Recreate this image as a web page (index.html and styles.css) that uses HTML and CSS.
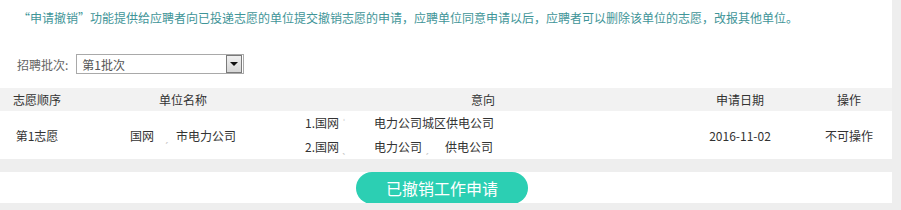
FILE: index.html
```html
<!DOCTYPE html>
<html lang="zh-CN">
<head>
    <meta charset="UTF-8">
    <title>申请撤销</title>
    <link rel="stylesheet" href="styles.css">
</head>
<body>
    <div class="main">
        <div class="panel">
            <p class="intro">“申请撤销”功能提供给应聘者向已投递志愿的单位提交撤销志愿的申请，应聘单位同意申请以后，应聘者可以删除该单位的志愿，改报其他单位。</p>

            <div class="filter">
                <label>招聘批次:</label>
                <div class="select">
                    <span class="select-text">第1批次</span>
                    <span class="select-btn"><i class="caret"></i></span>
                </div>
            </div>

            <table class="wish-table">
                <thead>
                    <tr>
                        <th class="col-order">志愿顺序</th>
                        <th class="col-unit">单位名称</th>
                        <th class="col-intent">意向</th>
                        <th class="col-date">申请日期</th>
                        <th class="col-op">操作</th>
                    </tr>
                </thead>
                <tbody>
                    <tr>
                        <td class="col-order">第1志愿</td>
                        <td class="col-unit">国网<span class="mask w22">ˏ</span>市电力公司</td>
                        <td class="col-intent">
                            <div>1.国网<span class="mask w35">ˈ</span>电力公司城区供电公司</div>
                            <div>2.国网<span class="mask w35">ˎ</span>电力公司<span class="mask w23">ˏ</span>供电公司</div>
                        </td>
                        <td class="col-date">2016-11-02</td>
                        <td class="col-op">不可操作</td>
                    </tr>
                </tbody>
            </table>
        </div>

        <div class="action-bar">
            <button class="revoke-btn" disabled>已撤销工作申请</button>
        </div>
    </div>
</body>
</html>
```

FILE: styles.css
```css
body {
    margin: 0;
    background-color: #eeeeee;
    font-family: "Microsoft YaHei", "Noto Sans CJK SC", sans-serif;
    font-size: 12px;
    color: #333;
}
.main {
    width: 892px;
}
.panel {
    background: #fff;
}
.intro {
    margin: 0;
    padding: 8px 18px 0;
    line-height: 20px;
    color: #3f9598;
}
.filter {
    display: flex;
    align-items: center;
    margin: 26px 0 0 17px;
    height: 20px;
}
.filter label {
    color: #666;
    margin-right: 8px;
}
.select {
    display: flex;
    align-items: center;
    justify-content: space-between;
    width: 166px;
    height: 18px;
    border: 1px solid #a9a9a9;
    background: #fff;
}
.select-text {
    padding-left: 5px;
    color: #555;
}
.select-btn {
    display: flex;
    align-items: center;
    justify-content: center;
    width: 14px;
    height: 16px;
    margin-right: 1px;
    border: 1px solid #7a7a7a;
    background: linear-gradient(#f0f0f0, #d6d6d6);
}
.caret {
    width: 0;
    height: 0;
    border-left: 4px solid transparent;
    border-right: 4px solid transparent;
    border-top: 4px solid #111;
}
.wish-table {
    width: 892px;
    margin-top: 14px;
    border-collapse: collapse;
    table-layout: fixed;
}
.wish-table th {
    height: 23px;
    padding: 0;
    font-weight: normal;
    background: #f2f2f2;
    text-align: center;
}
.wish-table td {
    height: 47px;
    padding: 0;
    text-align: center;
}
.col-order { width: 74px; }
.col-unit { width: 218px; }
.col-intent { width: 382px; }
.col-date { width: 132px; }
.col-op { width: 86px; }
.wish-table td.col-intent {
    text-align: left;
    padding-left: 13px;
    line-height: 24px;
}
.mask {
    display: inline-block;
    color: #c8c8c8;
    padding-left: 3px;
    box-sizing: border-box;
    white-space: nowrap;
    vertical-align: top;
}
.w22 { width: 22px; }
.w23 { width: 23px; }
.w35 { width: 35px; }
.action-bar {
    height: 31px;
    margin-top: 13px;
    background: #fff;
    text-align: center;
    padding-right: 8px;
}
.revoke-btn {
    width: 172px;
    height: 32px;
    border: none;
    border-radius: 16px;
    background-color: #2ccfb3;
    color: #fff;
    font-family: "Microsoft YaHei", "Noto Sans CJK SC", sans-serif;
    font-size: 16px;
    padding: 0;
}
```
